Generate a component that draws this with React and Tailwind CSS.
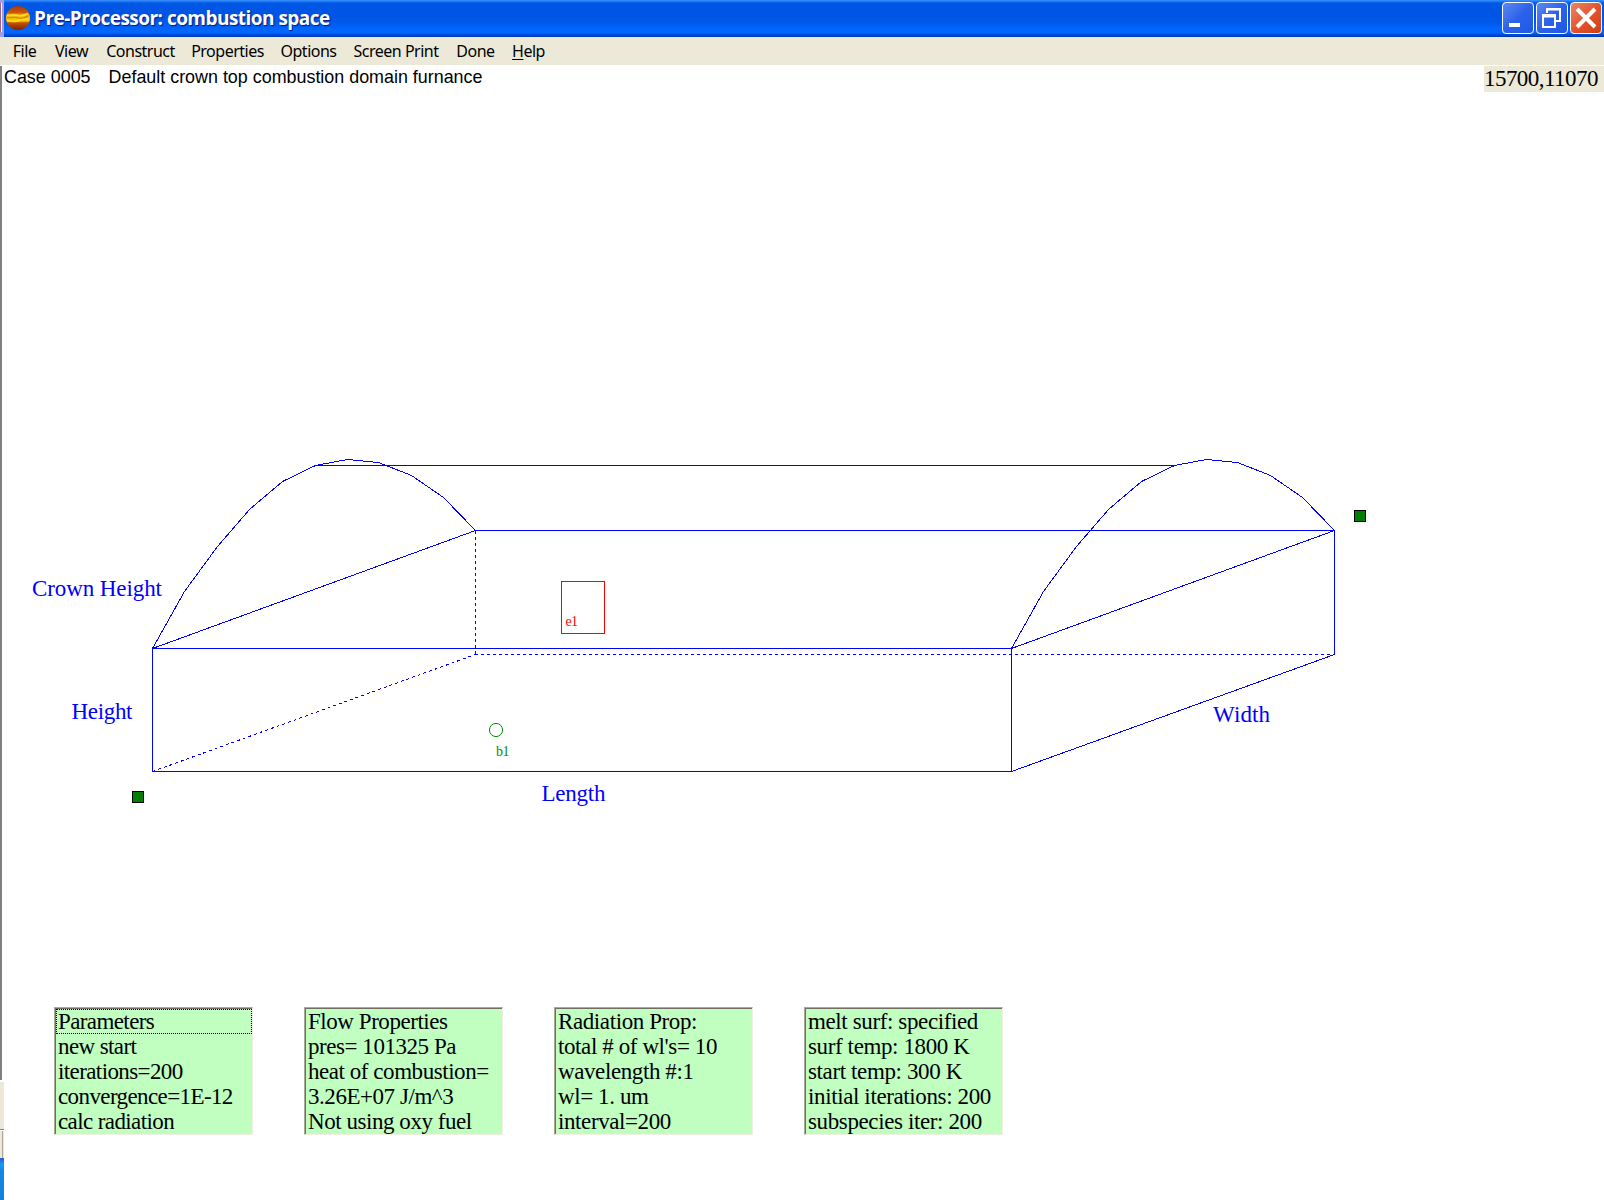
const BLUE = "#0000ff";

const menu = [
  ["File", "w-[25px] ml-[12px]"],
  ["View", "w-[35px] ml-[17px]"],
  ["Construct", "w-[67px] ml-[18px]"],
  ["Properties", "w-[71px] ml-[18px]"],
  ["Options", "w-[55px] ml-[18px]"],
  ["Screen Print", "w-[86px] ml-[17px]"],
  ["Done", "w-[37px] ml-[18px]"],
];

const panels = [
  { tracking: "tracking-[-0.6px]", lines: ["Parameters", "new start", "iterations=200", "convergence=1E-12", "calc radiation"] },
  { tracking: "tracking-[-0.45px]", lines: ["Flow Properties", "pres= 101325 Pa", "heat of combustion=", "3.26E+07 J/m^3", "Not using oxy fuel"] },
  { tracking: "tracking-[-0.4px]", lines: ["Radiation Prop:", "total # of wl's= 10", "wavelength #:1", "wl= 1. um", "interval=200"] },
  { tracking: "tracking-[-0.38px]", lines: ["melt surf: specified", "surf temp: 1800 K", "start temp: 300 K", "initial iterations: 200", "subspecies iter: 200"] },
];

const crown = [
  [152.5, 648.5], [184.5, 591.5], [217.5, 546.5], [249.5, 509.5], [282.5, 481.5], [315.5, 465.5],
  [347.5, 459.5], [378.5, 462.5], [411.5, 475.5], [443.5, 497.5], [475.5, 530.5],
];
const arch = (dx) => crown.map(([x, y]) => `${x + dx},${y}`).join(" ");

function AppIcon() {
  return (
    <svg className="ml-[2px] h-[24px] w-[24px] shrink-0" viewBox="0 0 24 24">
      <defs>
        <linearGradient id="planet" x1="0" y1="0" x2="0" y2="1">
          <stop offset="0" stopColor="#a83808" />
          <stop offset="0.28" stopColor="#d05808" />
          <stop offset="0.36" stopColor="#f0a808" />
          <stop offset="0.62" stopColor="#f8d000" />
          <stop offset="0.7" stopColor="#c85000" />
          <stop offset="1" stopColor="#802000" />
        </linearGradient>
      </defs>
      <circle cx="12" cy="12" r="12" fill="url(#planet)" />
      <path d="M1 9.5q6-1 11 0t10-2M1 14.5q8 2 12 0t10-1" stroke="#ffe020" strokeWidth="1.6" fill="none" />
      <path d="M1 12q8-1 12 0t9-2" stroke="#d88000" strokeWidth="1.2" fill="none" />
    </svg>
  );
}

function WinButton({ close, children }) {
  return (
    <div
      className={
        "flex h-[32px] w-[32px] items-center justify-center rounded-[4px] border border-white " +
        (close
          ? "bg-linear-to-br from-[#e8866a] via-[#e4532c] to-[#cc4014]"
          : "bg-linear-to-br from-[#5c88ee] via-[#2c62ea] to-[#2058e4]")
      }
    >
      <svg className="h-[30px] w-[30px]" viewBox="0 0 30 30">{children}</svg>
    </div>
  );
}

function Diagram() {
  return (
    <svg className="absolute inset-0 h-[1200px] w-[1604px]" viewBox="0 0 1604 1200">
      <g stroke={BLUE} fill="none" strokeWidth="1" shapeRendering="crispEdges">
        <path d="M315 465.5H1174M475 530.5H1334.5V654.5L1011.5 771.5H152.5V648.5H1011.5V771.5" />
        <path d="M152.5 648.5L475.5 530.5M1011.5 648.5L1334.5 530.5" />
        <polyline points={arch(0)} />
        <polyline points={arch(859)} />
        <path d="M475.5 531V654M475 654.5H1334M152.5 771.5L475.5 654.5" strokeDasharray="3 3" />
      </g>
      <rect x="561.5" y="581.5" width="43" height="52" fill="none" stroke="#ff0000" shapeRendering="crispEdges" />
      <circle cx="496" cy="730" r="6.6" fill="none" stroke="#009000" />
      <g fill="#008000" stroke="#000" shapeRendering="crispEdges">
        <rect x="132.5" y="791.5" width="11" height="11" />
        <rect x="1354.5" y="510.5" width="11" height="11" />
      </g>
      <g fontFamily="'Liberation Serif', serif" fontSize="23" fill={BLUE}>
        <text x="32" y="596" textLength="130">Crown Height</text>
        <text x="71.5" y="719" textLength="61">Height</text>
        <text x="541.5" y="801" textLength="64">Length</text>
        <text x="1213" y="722" textLength="57">Width</text>
      </g>
      <g fontFamily="'Liberation Serif', serif" fontSize="14">
        <text x="565.5" y="626" textLength="12.5" fill="#ff0000">e1</text>
        <text x="496" y="756" textLength="13.5" fill="#009000">b1</text>
      </g>
    </svg>
  );
}

export default function App() {
  return (
    <div className="relative flex h-[1200px] w-[1604px] flex-col overflow-hidden bg-white text-black">
      <header className="flex h-[37px] shrink-0">
        <div className="flex h-full w-[4px] flex-col bg-[#a39ce0]">
          <div className="mt-[3px] h-[29px] w-[2px] border-r border-white bg-[#a06088]" />
        </div>
        <div className="flex flex-1 items-center bg-[linear-gradient(180deg,#3a93ff_0,#2a80fa_1px,#0058e6_3px,#0054e3_14px,#0058ea_22px,#0066ff_29px,#0066ff_33px,#0048d0_35px,#0038b0_37px)] pr-[2px] pb-[1px]">
          <AppIcon />
          <h1 className="ml-[4px] font-['Open_Sans'] text-[19px] leading-[24px] font-bold tracking-[-0.53px] whitespace-nowrap text-white [text-shadow:1px_1px_1px_#0a1883]">
            Pre-Processor: combustion space
          </h1>
          <div className="ml-auto flex gap-[2px]">
            <WinButton><rect x="6" y="20" width="11" height="4" fill="#fff" /></WinButton>
            <WinButton>
              <path d="M10 10V6H23V18H19M10 6.5H23" stroke="#fff" strokeWidth="2" fill="none" />
              <path d="M6 12H18V24H6ZM6 13.5H18" stroke="#fff" strokeWidth="2" fill="none" />
            </WinButton>
            <WinButton close><path d="M6 6L24 24M24 6L6 24" stroke="#fff" strokeWidth="4" /></WinButton>
          </div>
        </div>
      </header>

      <nav className="flex h-[28px] shrink-0 items-center bg-[#ece9d8] font-['Noto_Sans'] text-[16px] leading-[20px] tracking-[-0.5px]">
        {menu.map(([label, cls]) => (
          <div key={label} className={"flex justify-center whitespace-nowrap " + cls}>{label}</div>
        ))}
        <div className="ml-[18px] flex w-[33px] justify-center whitespace-nowrap"><span className="underline underline-offset-2">H</span>elp</div>
      </nav>

      <main className="flex flex-1">
        <div className="flex w-[4px] shrink-0 flex-col">
          <div className="mt-px h-[1014px] w-[2px] bg-[#808080]" />
          <div className="mt-[2px] h-[47px] bg-[#ece9d8]" />
          <div className="h-px bg-[#808080]" />
          <div className="h-px bg-white" />
          <div className="flex h-[27px] bg-[#ece9d8]">
            <div className="ml-[2px] w-px bg-[#aca899]" />
          </div>
          <div className="flex-1 bg-[linear-gradient(180deg,#1c5cd8_0,#2a70e8_3px,#10a0f0_7px,#1288e4_12px,#1080e0_100%)]" />
        </div>
        <div className="flex flex-1 flex-col">
          <div className="flex items-start">
            <p className="flex gap-[18px] pt-[3px] font-['Liberation_Sans'] text-[17.9px] leading-[18px] whitespace-nowrap">
              <span>Case 0005</span>
              <span>Default crown top combustion domain furnance</span>
            </p>
            <div className="mt-px ml-auto h-[26px] w-[120px] bg-[#ece9d8] font-['Liberation_Serif'] text-[23px] leading-[25px] tracking-[-0.55px] whitespace-nowrap">15700,11070</div>
          </div>
          <div className="mt-auto mb-[65px] ml-[50px] flex gap-[51px]">
            {panels.map(({ tracking, lines }, i) => (
              <section key={i} className={"h-[128px] w-[199px] border border-t-[#aca899] border-r-[#f1efe2] border-b-[#f1efe2] border-l-[#aca899] bg-[#c0ffc0] font-['Liberation_Serif'] text-[23px] leading-[25px] " + tracking}>
                <div className="h-full border-t border-l border-[#716f64]">
                  {lines.map((line, j) => (
                    <div key={j} className={"h-[25px] pl-[2px] whitespace-nowrap " + (i === 0 && j === 0 ? "outline-1 -outline-offset-1 outline-dotted outline-black" : "")}>{line}</div>
                  ))}
                </div>
              </section>
            ))}
          </div>
        </div>
      </main>
      <Diagram />
    </div>
  );
}
